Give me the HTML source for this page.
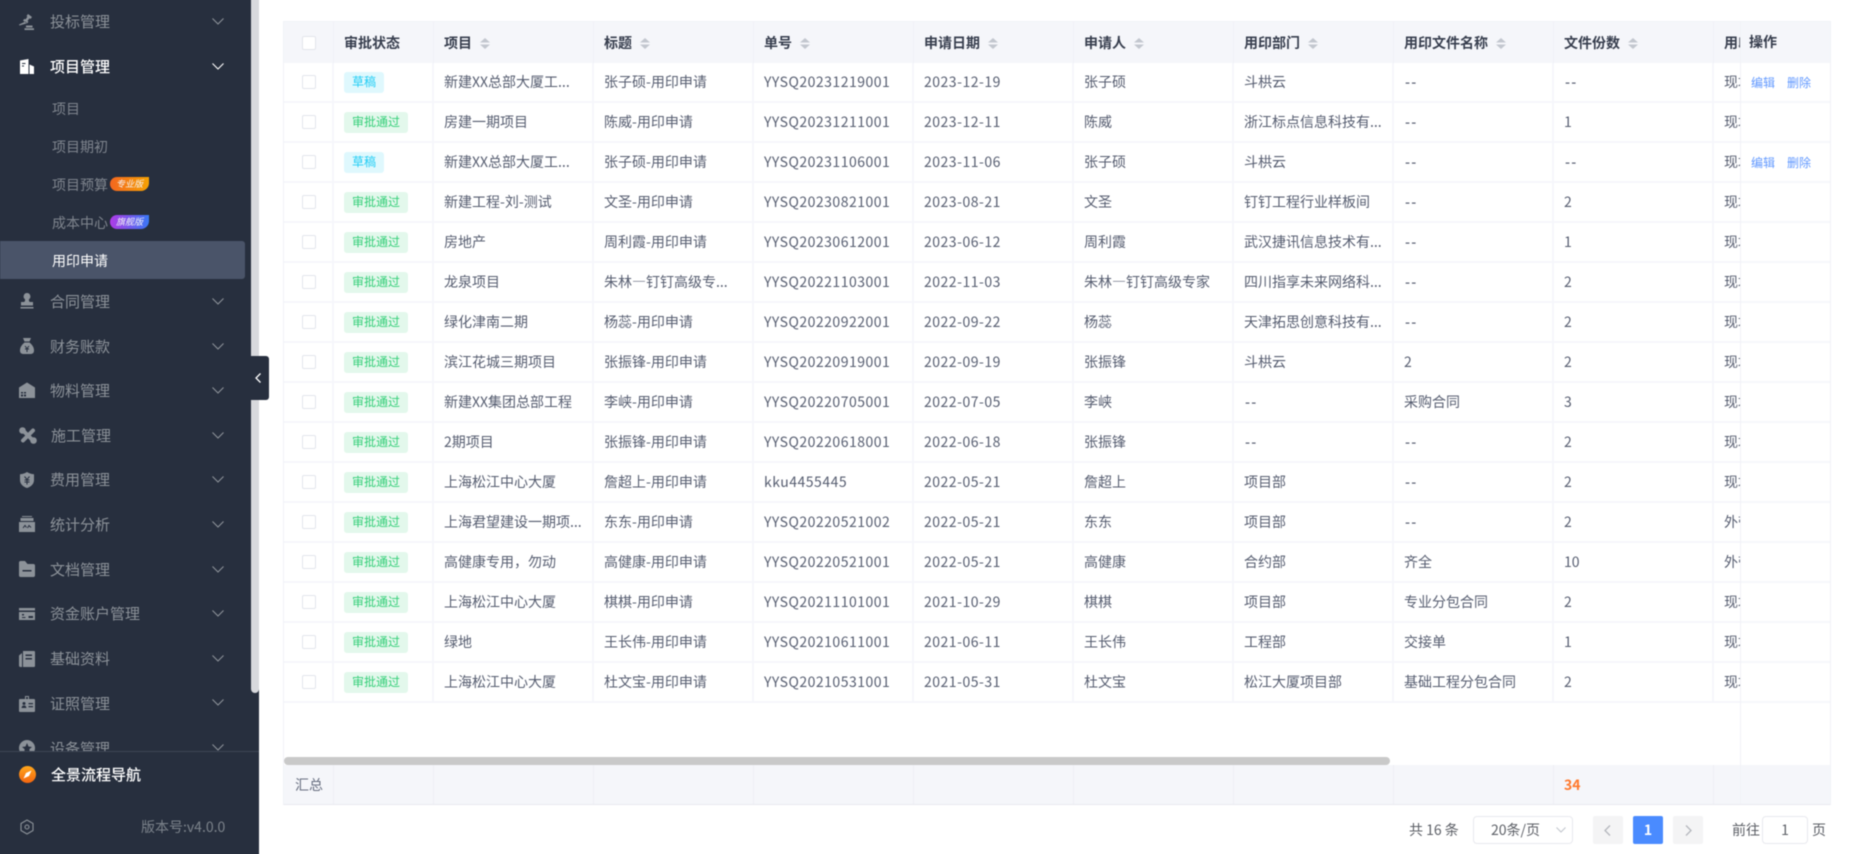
<!DOCTYPE html>
<html lang="zh"><head><meta charset="utf-8"><title>用印申请</title>
<style>
*{box-sizing:border-box}
html{margin:0;padding:0;width:1853px;height:854px;overflow:hidden;background:#fff}
body{margin:0;padding:0;position:relative;width:1853px;height:854px;overflow:hidden;background:#fff;font-family:"Noto Sans CJK SC","Liberation Sans",sans-serif;font-size:14px;color:#565d70}
#root{position:absolute;left:0;top:0;width:1853px;height:854px;filter:blur(.4px)}
#bg{position:absolute;left:-12px;top:-12px;width:271px;height:878px;background:#272f3e}
#top{position:absolute;left:259px;top:-12px;width:1606px;height:12px;background:#fff}
#side{position:absolute;left:0;top:0;width:259px;height:854px;background:#272f3e}
#menu{position:absolute;left:0;top:0;width:251px;height:751px;overflow:hidden}
.m{position:absolute;left:50px;height:40px;line-height:40px;font-size:15px;color:#8c9299;white-space:nowrap}
.m.on{color:#fff}
.s{position:absolute;left:52px;height:38px;line-height:38px;font-size:14px;color:#7f858e;white-space:nowrap}
.ic{position:absolute;left:19px;width:16px;height:16px;fill:#8c9299}
.ch{position:absolute;left:212px;width:12px;height:7px;fill:none;stroke:#8c9299;stroke-width:1.1}
.act{position:absolute;left:0;top:241px;width:245px;height:38px;background:#4a5469;border-radius:0 3px 3px 0}
.bd{position:absolute;left:110px;width:39px;height:14px;border-radius:7px 0 8px 7px;color:#fff;font-size:9px;line-height:14px;text-align:center;font-style:italic;opacity:.95}
#thumb{position:absolute;left:251px;top:-12px;width:8px;height:705px;background:#d8d9dd;border-radius:0 0 4px 4px}
#hd{position:absolute;left:251px;top:356px;width:18px;height:44px;background:#272f3e;border-radius:0 3px 3px 0}
#div{position:absolute;left:-12px;top:751px;width:271px;height:1px;background:#3d4554}
table{border-collapse:separate;border-spacing:0;table-layout:fixed;width:1430px;position:absolute;left:0}
#wrap{position:absolute;left:283px;top:21px;width:1548px;height:784px;border:1px solid #f1f2f7;border-bottom:1px solid #e9eaf0;overflow:hidden}
td,th{padding:0 0 0 10px;height:40px;border-right:2px solid #f6f7fb;border-bottom:2px solid #f6f7fb;white-space:nowrap;overflow:hidden;text-align:left;font-weight:400}
th{background:#f5f6fa;height:41px;color:#373e4e;font-weight:700;border-bottom:0;border-right:1px solid #f0f1f6;position:relative}
.n{letter-spacing:.5px}
.d{letter-spacing:1.2px;font-weight:500;margin-left:1px}
.cb{display:block;width:14px;height:14px;border:1px solid #e3e5ec;border-radius:2px;background:#fff;margin-left:8px}
.tag{display:inline-block;height:21px;line-height:20px;padding:0 8px;border-radius:3px;font-size:12px;vertical-align:middle;margin-top:-1px}
.g{background:#e3f8ec;color:#34cf78}.c{background:#dff8fd;color:#22cdf5}
.so{display:inline-block;width:10px;height:11px;margin-left:8px;vertical-align:-1px}
#foot{position:absolute;left:0;top:743px;height:39px;width:1546px;background:#f5f6fa}
#foot i{position:absolute;top:0;bottom:0;width:1px;background:#eff0f5}
#bar{position:absolute;left:0;top:735px;width:1106px;height:8px;border-radius:4px;background:#c9c9c9}
#op{position:absolute;left:1456px;top:0;width:90px;height:782px;border-left:1px solid #f1f2f7;background:#fff}
#op div{position:absolute;left:0;width:89px;height:40px;line-height:40px;border-bottom:2px solid #f6f7fb;padding-left:10px;font-size:12px;color:#6299ff;white-space:nowrap}
#op div span{margin-right:12px}
#op .h{top:0;height:41px;line-height:40px;background:#f5f6fa;border-bottom:0;font-size:14px;font-weight:700;color:#373e4e;padding-left:8px}
#op .f{top:743px;height:39px;background:#f5f6fa;border:0}
.p{position:absolute;top:816px;height:28px;line-height:28px;font-size:14px;color:#5c5f66;white-space:nowrap}
.pb{position:absolute;top:816px;width:30px;height:28px;background:#f4f4f5;border-radius:2px}
</style></head><body>
<div id="root">
<div id="bg"></div><div id="top"></div>
<svg width="0" height="0" style="position:absolute"><defs>
<path id="chev" d="M.5.5 6 6 11.500.5"/>
<g id="sort"><path d="M5 0 10 4.500H0z" fill="#c3c7cf"/><path d="M5 11 0 6.500H10z" fill="#c3c7cf"/></g>
</defs></svg>

<div id="side">
<div id="menu">
<div class="act"></div>
<svg class="ic" style="top:14px" viewBox="0 0 16 16"><path d="M9 0 13 3 11.500 5 10.500 4.300 8.500 7 9.500 7.800 8 9.500 4 6.500 5.500 4.800 6.400 5.500 8.400 2.800 7.500 2zM6.500 7.500 0 10.500.5 11.500 8 9.200zM7 11.500H13.500V13.500H7zM5.500 14.200H15V16H5.500z"/></svg>
<div class="m" style="top:2px">投标管理</div><svg class="ch" style="top:18px" viewBox="0 0 12 7"><use href="#chev"/></svg>

<svg class="ic" style="top:59px;fill:#fff" viewBox="0 0 16 16"><path d="M1 1.500 9.500 0V15H1zM3 4V5H6.500V4zM3 6.500V7.500H5V6.500zM10.500 5.500 15 7.500V15H10.500z"/></svg>
<div class="m on" style="top:47px;font-weight:500">项目管理</div><svg class="ch" style="top:63px;stroke:#fff" viewBox="0 0 12 7"><use href="#chev"/></svg>

<div class="s" style="top:90px">项目</div>
<div class="s" style="top:128px">项目期初</div>
<div class="s" style="top:166px">项目预算</div><div class="bd" style="top:177px;background:linear-gradient(90deg,#ff6a1f,#ffa800)">专业版</div>
<div class="s" style="top:204px">成本中心</div><div class="bd" style="top:215px;background:linear-gradient(90deg,#b73cf0,#3b7cff)">旗舰版</div>
<div class="s" style="top:242px;color:#fff">用印申请</div>

<svg class="ic" style="top:293px" viewBox="0 0 16 16"><path d="M8 0A3.500 3.500 0 0 1 10 6.300C9.800 8 10 8.500 11 9H14V12.500H2V9H5C6 8.500 6.200 8 6 6.300A3.500 3.500 0 0 1 8 0zM1.500 14H14.500V15.500H1.500z"/></svg>
<div class="m" style="top:282px">合同管理</div><svg class="ch" style="top:298px" viewBox="0 0 12 7"><use href="#chev"/></svg>

<svg class="ic" style="top:338px" viewBox="0 0 16 16"><path d="M4 0H12L10.500 3.500H5.500zM5.500 4.500H10.500C13.500 7 15 9.500 15 12.500 15 15 13.500 16 11.500 16H4.500C2.500 16 1 15 1 12.500 1 9.500 2.500 7 5.500 4.500z"/><path d="M6 8 8 10.500 10 8M6 11H10M8 10.500V14" stroke="#272f3e" fill="none"/></svg>
<div class="m" style="top:327px">财务账款</div><svg class="ch" style="top:343px" viewBox="0 0 12 7"><use href="#chev"/></svg>

<svg class="ic" style="top:382px" viewBox="0 0 16 16"><path d="M8 .5 16 5.500V16H0V5.500z"/><path d="M2 10H7V14.500H2z" fill="#272f3e"/><path d="M4.500 10V14.500M2 12H7" stroke="#8c9299" fill="none"/></svg>
<div class="m" style="top:371px">物料管理</div><svg class="ch" style="top:387px" viewBox="0 0 12 7"><use href="#chev"/></svg>

<svg class="ic" style="top:427px;left:19px;width:18px;height:17px" viewBox="0 0 18 17"><path d="M4 3.500 14 13.500M14 3.500 4 13.500" stroke="#8c9299" stroke-width="4" stroke-linecap="round" fill="none"/><circle cx="3.500" cy="3.500" r="3.300"/><circle cx="14.500" cy="13.500" r="3.300"/></svg>
<div class="m" style="top:416px;left:51px">施工管理</div><svg class="ch" style="top:432px" viewBox="0 0 12 7"><use href="#chev"/></svg>

<svg class="ic" style="top:472px" viewBox="0 0 16 16"><path d="M8 0C10 1.200 12 2 15 2.300V8C15 12 12 14.800 8 16 4 14.800 1 12 1 8V2.300C4 2 6 1.200 8 0z"/><path d="M5.500 4.500 8 7.500 10.500 4.500M5.500 8H10.500M5.500 10H10.500M8 7.500V12.500" stroke="#272f3e" fill="none"/></svg>
<div class="m" style="top:460px">费用管理</div><svg class="ch" style="top:476px" viewBox="0 0 12 7"><use href="#chev"/></svg>

<svg class="ic" style="top:516px" viewBox="0 0 16 16"><path d="M3 0H13V1H3zM1.500 2H14.500V5H1.500zM0 6H16V16H0z"/><path d="M4 12 6 9.500 7.500 11.500M8.500 12 10 9.500 12 11.500" stroke="#272f3e" fill="none"/></svg>
<div class="m" style="top:505px">统计分析</div><svg class="ch" style="top:521px" viewBox="0 0 12 7"><use href="#chev"/></svg>

<svg class="ic" style="top:561px" viewBox="0 0 16 16"><path d="M0 1.500C0 .7.700 0 1.500 0H6L8.500 3H14.500C15.300 3 16 3.700 16 4.500V14.500C16 15.300 15.300 16 14.500 16H1.500C.7 16 0 15.300 0 14.500z"/><path d="M3.500 9H12.500V10.500H3.500z" fill="#272f3e"/></svg>
<div class="m" style="top:550px">文档管理</div><svg class="ch" style="top:566px" viewBox="0 0 12 7"><use href="#chev"/></svg>

<svg class="ic" style="top:606px" viewBox="0 0 16 16"><path d="M0 2H16V14H0z"/><path d="M0 4.500H16V6H0zM3 8H5V9.500H3zM3 11H6.500V12H3zM9.500 10H14V12H9.500z" fill="#272f3e"/></svg>
<div class="m" style="top:594px">资金账户管理</div><svg class="ch" style="top:610px" viewBox="0 0 12 7"><use href="#chev"/></svg>

<svg class="ic" style="top:651px" viewBox="0 0 16 16"><path d="M4 0H15C15.600 0 16 .4 16 1V15C16 15.600 15.600 16 15 16H4zM3 2V16H1.500C.6 16 0 15.400 0 14.500V4.500z"/><path d="M6.500 3.500H13V5H6.500zM6.500 7H13V8.500H6.500z" fill="#272f3e"/></svg>
<div class="m" style="top:639px">基础资料</div><svg class="ch" style="top:655px" viewBox="0 0 12 7"><use href="#chev"/></svg>

<svg class="ic" style="top:696px" viewBox="0 0 16 16"><path d="M6 0H10V3H15C15.600 3 16 3.400 16 4V15C16 15.600 15.600 16 15 16H1C.4 16 0 15.600 0 15V4C0 3.400.4 3 1 3H6z"/><path d="M7 1V3H9V1zM9.500 7H14V8.200H9.500zM9.500 10H14V11.200H9.500zM2.500 12C3 10 3.500 9.500 5 9.500 6.500 9.500 7 10 7.500 12z" fill="#272f3e"/><circle cx="5" cy="7.500" r="1.500" fill="#272f3e"/></svg>
<div class="m" style="top:684px">证照管理</div><svg class="ch" style="top:699px" viewBox="0 0 12 7"><use href="#chev"/></svg>

<svg class="ic" style="top:740px" viewBox="0 0 16 16"><circle cx="8" cy="8" r="8"/><path d="M8 3 9.500 6.500 13 7 10.300 9.300 11 13 8 11 5 13 5.700 9.300 3 7 6.500 6.500z" fill="#272f3e"/></svg>
<div class="m" style="top:729px">设备管理</div><svg class="ch" style="top:744px" viewBox="0 0 12 7"><use href="#chev"/></svg>
</div>
<div id="thumb"></div>
<div id="div"></div>
<svg style="position:absolute;left:19px;top:766px" width="17" height="17" viewBox="0 0 17 17"><defs><linearGradient id="og" x1="0" y1="0" x2="0" y2="1"><stop offset="0" stop-color="#ffa81c"/><stop offset="1" stop-color="#f4650f"/></linearGradient></defs><circle cx="8.500" cy="8.500" r="8.500" fill="url(#og)"/><path d="M12.500 4.500 10 10 4.500 12.500 7 7z" fill="#fff"/></svg>
<div class="m" style="left:51px;top:755px;color:#fff;font-weight:500">全景流程导航</div>
<svg style="position:absolute;left:19px;top:819px" width="16" height="16" viewBox="0 0 16 16" fill="none" stroke="#8c9299" stroke-width="1.100"><path d="M8 1 14 4.500V11.500L8 15 2 11.500V4.500z" stroke-linejoin="round"/><circle cx="8" cy="8" r="2"/></svg>
<div style="position:absolute;left:141px;top:817px;height:20px;line-height:20px;font-size:14px;color:#7c838b;white-space:nowrap">版本号:v4.0.0</div>
</div>
<div id="hd"><svg style="position:absolute;left:4px;top:17px" width="6" height="10" viewBox="0 0 6 10" fill="none" stroke="#fff" stroke-width="1.300"><path d="M5.500.5 1 5 5.500 9.500"/></svg></div>

<div id="wrap">
<table style="top:0">
<colgroup><col style="width:50px"><col style="width:100px"><col style="width:160px"><col style="width:160px"><col style="width:160px"><col style="width:160px"><col style="width:160px"><col style="width:160px"><col style="width:160px"><col style="width:160px"><col style="width:160px"></colgroup>
<tr><th><span class="cb"></span></th><th>审批状态</th><th>项目<svg class="so" viewBox="0 0 10 11"><use href="#sort"/></svg></th><th>标题<svg class="so" viewBox="0 0 10 11"><use href="#sort"/></svg></th><th>单号<svg class="so" viewBox="0 0 10 11"><use href="#sort"/></svg></th><th>申请日期<svg class="so" viewBox="0 0 10 11"><use href="#sort"/></svg></th><th>申请人<svg class="so" viewBox="0 0 10 11"><use href="#sort"/></svg></th><th>用印部门<svg class="so" viewBox="0 0 10 11"><use href="#sort"/></svg></th><th>用印文件名称<svg class="so" viewBox="0 0 10 11"><use href="#sort"/></svg></th><th>文件份数<svg class="so" viewBox="0 0 10 11"><use href="#sort"/></svg></th><th>用印方式</th></tr>
<tr><td><span class="cb"></span></td><td><span class="tag c">草稿</span></td><td>新建XX总部大厦工...</td><td>张子硕-用印申请</td><td class="n">YYSQ20231219001</td><td class="n">2023-12-19</td><td>张子硕</td><td>斗栱云</td><td><span class="d">--</span></td><td><span class="d">--</span></td><td>现场</td></tr>
<tr><td><span class="cb"></span></td><td><span class="tag g">审批通过</span></td><td>房建一期项目</td><td>陈威-用印申请</td><td class="n">YYSQ20231211001</td><td class="n">2023-12-11</td><td>陈威</td><td>浙江标点信息科技有...</td><td><span class="d">--</span></td><td>1</td><td>现场</td></tr>
<tr><td><span class="cb"></span></td><td><span class="tag c">草稿</span></td><td>新建XX总部大厦工...</td><td>张子硕-用印申请</td><td class="n">YYSQ20231106001</td><td class="n">2023-11-06</td><td>张子硕</td><td>斗栱云</td><td><span class="d">--</span></td><td><span class="d">--</span></td><td>现场</td></tr>
<tr><td><span class="cb"></span></td><td><span class="tag g">审批通过</span></td><td>新建工程-刘-测试</td><td>文圣-用印申请</td><td class="n">YYSQ20230821001</td><td class="n">2023-08-21</td><td>文圣</td><td>钉钉工程行业样板间</td><td><span class="d">--</span></td><td>2</td><td>现场</td></tr>
<tr><td><span class="cb"></span></td><td><span class="tag g">审批通过</span></td><td>房地产</td><td>周利霞-用印申请</td><td class="n">YYSQ20230612001</td><td class="n">2023-06-12</td><td>周利霞</td><td>武汉捷讯信息技术有...</td><td><span class="d">--</span></td><td>1</td><td>现场</td></tr>
<tr><td><span class="cb"></span></td><td><span class="tag g">审批通过</span></td><td>龙泉项目</td><td>朱林—钉钉高级专...</td><td class="n">YYSQ20221103001</td><td class="n">2022-11-03</td><td>朱林—钉钉高级专家</td><td>四川指享未来网络科...</td><td><span class="d">--</span></td><td>2</td><td>现场</td></tr>
<tr><td><span class="cb"></span></td><td><span class="tag g">审批通过</span></td><td>绿化津南二期</td><td>杨蕊-用印申请</td><td class="n">YYSQ20220922001</td><td class="n">2022-09-22</td><td>杨蕊</td><td>天津拓思创意科技有...</td><td><span class="d">--</span></td><td>2</td><td>现场</td></tr>
<tr><td><span class="cb"></span></td><td><span class="tag g">审批通过</span></td><td>滨江花城三期项目</td><td>张振锋-用印申请</td><td class="n">YYSQ20220919001</td><td class="n">2022-09-19</td><td>张振锋</td><td>斗栱云</td><td>2</td><td>2</td><td>现场</td></tr>
<tr><td><span class="cb"></span></td><td><span class="tag g">审批通过</span></td><td>新建XX集团总部工程</td><td>李峡-用印申请</td><td class="n">YYSQ20220705001</td><td class="n">2022-07-05</td><td>李峡</td><td><span class="d">--</span></td><td>采购合同</td><td>3</td><td>现场</td></tr>
<tr><td><span class="cb"></span></td><td><span class="tag g">审批通过</span></td><td>2期项目</td><td>张振锋-用印申请</td><td class="n">YYSQ20220618001</td><td class="n">2022-06-18</td><td>张振锋</td><td><span class="d">--</span></td><td><span class="d">--</span></td><td>2</td><td>现场</td></tr>
<tr><td><span class="cb"></span></td><td><span class="tag g">审批通过</span></td><td>上海松江中心大厦</td><td>詹超上-用印申请</td><td class="n">kku4455445</td><td class="n">2022-05-21</td><td>詹超上</td><td>项目部</td><td><span class="d">--</span></td><td>2</td><td>现场</td></tr>
<tr><td><span class="cb"></span></td><td><span class="tag g">审批通过</span></td><td>上海君望建设一期项...</td><td>东东-用印申请</td><td class="n">YYSQ20220521002</td><td class="n">2022-05-21</td><td>东东</td><td>项目部</td><td><span class="d">--</span></td><td>2</td><td>外带</td></tr>
<tr><td><span class="cb"></span></td><td><span class="tag g">审批通过</span></td><td>高健康专用，勿动</td><td>高健康-用印申请</td><td class="n">YYSQ20220521001</td><td class="n">2022-05-21</td><td>高健康</td><td>合约部</td><td>齐全</td><td>10</td><td>外带</td></tr>
<tr><td><span class="cb"></span></td><td><span class="tag g">审批通过</span></td><td>上海松江中心大厦</td><td>棋棋-用印申请</td><td class="n">YYSQ20211101001</td><td class="n">2021-10-29</td><td>棋棋</td><td>项目部</td><td>专业分包合同</td><td>2</td><td>现场</td></tr>
<tr><td><span class="cb"></span></td><td><span class="tag g">审批通过</span></td><td>绿地</td><td>王长伟-用印申请</td><td class="n">YYSQ20210611001</td><td class="n">2021-06-11</td><td>王长伟</td><td>工程部</td><td>交接单</td><td>1</td><td>现场</td></tr>
<tr><td><span class="cb"></span></td><td><span class="tag g">审批通过</span></td><td>上海松江中心大厦</td><td>杜文宝-用印申请</td><td class="n">YYSQ20210531001</td><td class="n">2021-05-31</td><td>杜文宝</td><td>松江大厦项目部</td><td>基础工程分包合同</td><td>2</td><td>现场</td></tr>
</table>
<div id="bar"></div>
<div id="foot"><i style="left:49px"></i><i style="left:149px"></i><i style="left:309px"></i><i style="left:469px"></i><i style="left:629px"></i><i style="left:789px"></i><i style="left:949px"></i><i style="left:1109px"></i><i style="left:1269px"></i><i style="left:1429px"></i>
<span style="position:absolute;left:11px;top:10px;line-height:20px;color:#666d7f">汇总</span>
<span style="position:absolute;left:1280px;top:10px;line-height:20px;color:#ff7a2e;font-weight:700">34</span></div>
<div id="op"><div class="h">操作</div>
<div style="top:41px"><span>编辑</span><span>删除</span></div>
<div style="top:81px"></div>
<div style="top:121px"><span>编辑</span><span>删除</span></div>
<div style="top:161px"></div><div style="top:201px"></div><div style="top:241px"></div><div style="top:281px"></div><div style="top:321px"></div><div style="top:361px"></div><div style="top:401px"></div><div style="top:441px"></div><div style="top:481px"></div><div style="top:521px"></div><div style="top:561px"></div><div style="top:601px"></div><div style="top:641px"></div>
<div class="f"></div></div>
</div>

<div class="p" style="left:1409px">共 16 条</div>
<div class="p" style="left:1473px;width:100px;border:1px solid #e8e9ee;border-radius:4px;padding-left:17px;line-height:26px">20条/页<svg style="position:absolute;left:82px;top:10px" width="10" height="6" viewBox="0 0 10 6" fill="none" stroke="#c0c4cc"><path d="M.5.5 5 5 9.500.5"/></svg></div>
<div class="pb" style="left:1593px"><svg style="position:absolute;left:11px;top:9px" width="7" height="11" viewBox="0 0 7 11" fill="none" stroke="#b4b7bd" stroke-width="1.300"><path d="M6 .5 1 5.500 6 10.500"/></svg></div>
<div class="pb" style="left:1633px;background:#4a8bff;color:#fff;text-align:center;line-height:28px;font-weight:700">1</div>
<div class="pb" style="left:1673px"><svg style="position:absolute;left:12px;top:9px" width="7" height="11" viewBox="0 0 7 11" fill="none" stroke="#b4b7bd" stroke-width="1.300"><path d="M1 .5 6 5.500 1 10.500"/></svg></div>
<div class="p" style="left:1732px">前往</div>
<div class="p" style="left:1762px;width:46px;border:1px solid #e8e9ee;border-radius:4px;text-align:center;line-height:26px">1</div>
<div class="p" style="left:1812px">页</div>
</div>
</body></html>
